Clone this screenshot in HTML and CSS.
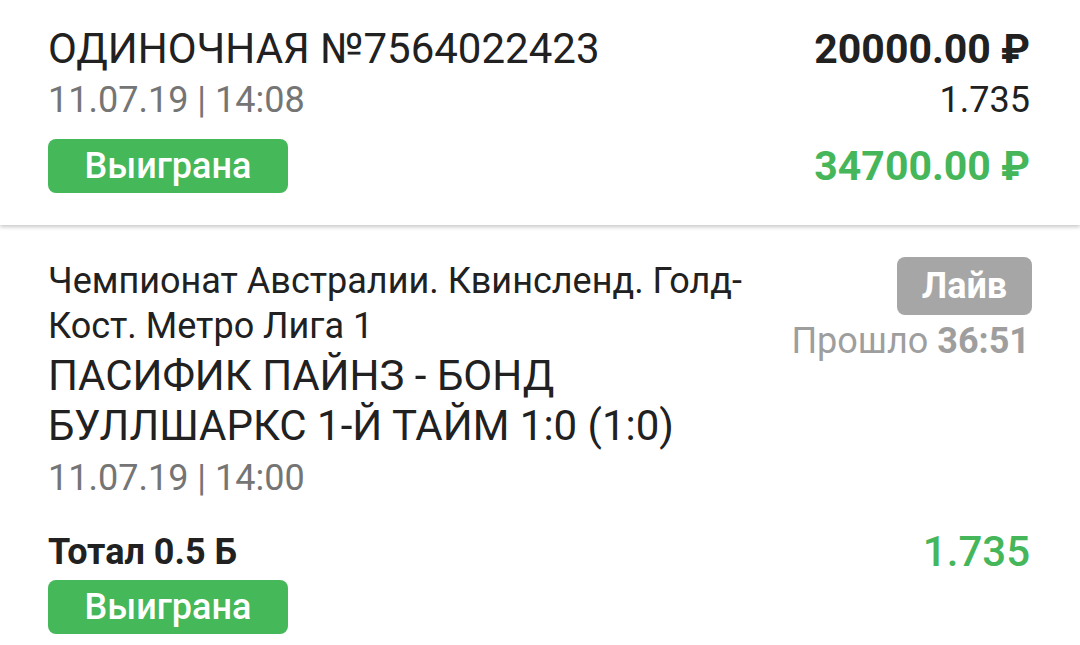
FILE: index.html
```html
<!DOCTYPE html>
<html lang="ru">
<head>
<meta charset="utf-8">
<title>Ставка</title>
<link rel="stylesheet" href="styles.css">
</head>
<body>
<div class="page">
  <section class="summary">
    <div class="sum-left">
      <div class="title">ОДИНОЧНАЯ №7564022423</div>
      <div class="date">11.07.19 | 14:08</div>
      <span class="badge win">Выиграна</span>
    </div>
    <div class="sum-right">
      <div class="stake">20000.00 ₽</div>
      <div class="coef">1.735</div>
      <div class="payout">34700.00 ₽</div>
    </div>
  </section>
  <section class="event">
    <div class="event-top">
      <div class="event-info">
        <div class="league">Чемпионат Австралии. Квинсленд. Голд-Кост. Метро Лига 1</div>
        <div class="match">ПАСИФИК ПАЙНЗ - БОНД БУЛЛШАРКС 1-Й ТАЙМ 1:0 (1:0)</div>
        <div class="date date-event">11.07.19 | 14:00</div>
      </div>
      <div class="event-status">
        <span class="badge live">Лайв</span>
        <div class="elapsed">Прошло <b>36:51</b></div>
      </div>
    </div>
    <div class="outcome">
      <div class="outcome-left">
        <div class="market">Тотал 0.5 Б</div>
        <span class="badge win">Выиграна</span>
      </div>
      <div class="odd">1.735</div>
    </div>
  </section>
</div>
</body>
</html>
```

FILE: styles.css
```css
* { box-sizing: border-box; }
html, body {
  margin: 0;
  padding: 0;
  background: #ffffff;
}
body {
  font-family: Roboto, "Noto Sans", "Liberation Sans", sans-serif;
  color: #212121;
  width: 1080px;
  height: 645px;
  overflow: hidden;
}
.page {
  display: flex;
  flex-direction: column;
}
.summary {
  display: flex;
  justify-content: space-between;
  padding: 25px 50px 32px 48px;
  height: 225px;
  background: #fff;
  box-shadow: 0 2px 4px rgba(0, 0, 0, 0.22);
  position: relative;
  z-index: 1;
}
.sum-left {
  display: flex;
  flex-direction: column;
  align-items: flex-start;
}
.title {
  font-size: 42px;
  line-height: 48px;
  color: #212121;
}
.date {
  font-size: 36px;
  line-height: 44px;
  color: #757575;
  margin-top: 5px;
}
.badge {
  display: inline-flex;
  align-items: center;
  justify-content: center;
  border-radius: 8px;
  color: #ffffff;
}
.badge.win {
  width: 240px;
  height: 54px;
  margin-top: 17px;
  background: #45b85a;
  font-size: 36px;
  font-weight: 500;
}
.sum-right {
  display: flex;
  flex-direction: column;
  align-items: flex-end;
}
.stake {
  font-size: 41px;
  line-height: 48px;
  font-weight: 700;
  color: #212121;
}
.coef {
  font-size: 36px;
  line-height: 44px;
  margin-top: 5px;
  color: #212121;
}
.payout {
  font-size: 41px;
  line-height: 54px;
  margin-top: 17px;
  font-weight: 700;
  color: #45b65a;
}
.event {
  display: flex;
  flex-direction: column;
  padding: 34px 48px 0 48px;
}
.event-top {
  display: flex;
  justify-content: space-between;
  align-items: flex-start;
}
.event-info {
  width: 712px;
}
.league {
  font-size: 36px;
  line-height: 45px;
  color: #212121;
}
.match {
  font-size: 42px;
  line-height: 50px;
  margin-top: 2px;
  color: #212121;
}
.date-event {
  line-height: 50px;
  margin-top: 2px;
}
.event-status {
  display: flex;
  flex-direction: column;
  align-items: flex-end;
  margin-top: -2px;
}
.badge.live {
  width: 135px;
  height: 58px;
  background: #a6a6a6;
  font-size: 36px;
  font-weight: 700;
}
.elapsed {
  font-size: 36px;
  line-height: 40px;
  margin-top: 6px;
  margin-right: 2px;
  color: #9e9e9e;
}
.elapsed b {
  font-weight: 700;
}
.outcome {
  display: flex;
  justify-content: space-between;
  align-items: flex-start;
  margin-top: 27px;
  padding-right: 2px;
}
.outcome-left {
  display: flex;
  flex-direction: column;
  align-items: flex-start;
}
.market {
  font-size: 36px;
  line-height: 44px;
  font-weight: 700;
  color: #212121;
}
.outcome .badge.win {
  margin-top: 6px;
}
.odd {
  font-size: 42px;
  line-height: 44px;
  font-weight: 500;
  color: #45b65a;
}
```
